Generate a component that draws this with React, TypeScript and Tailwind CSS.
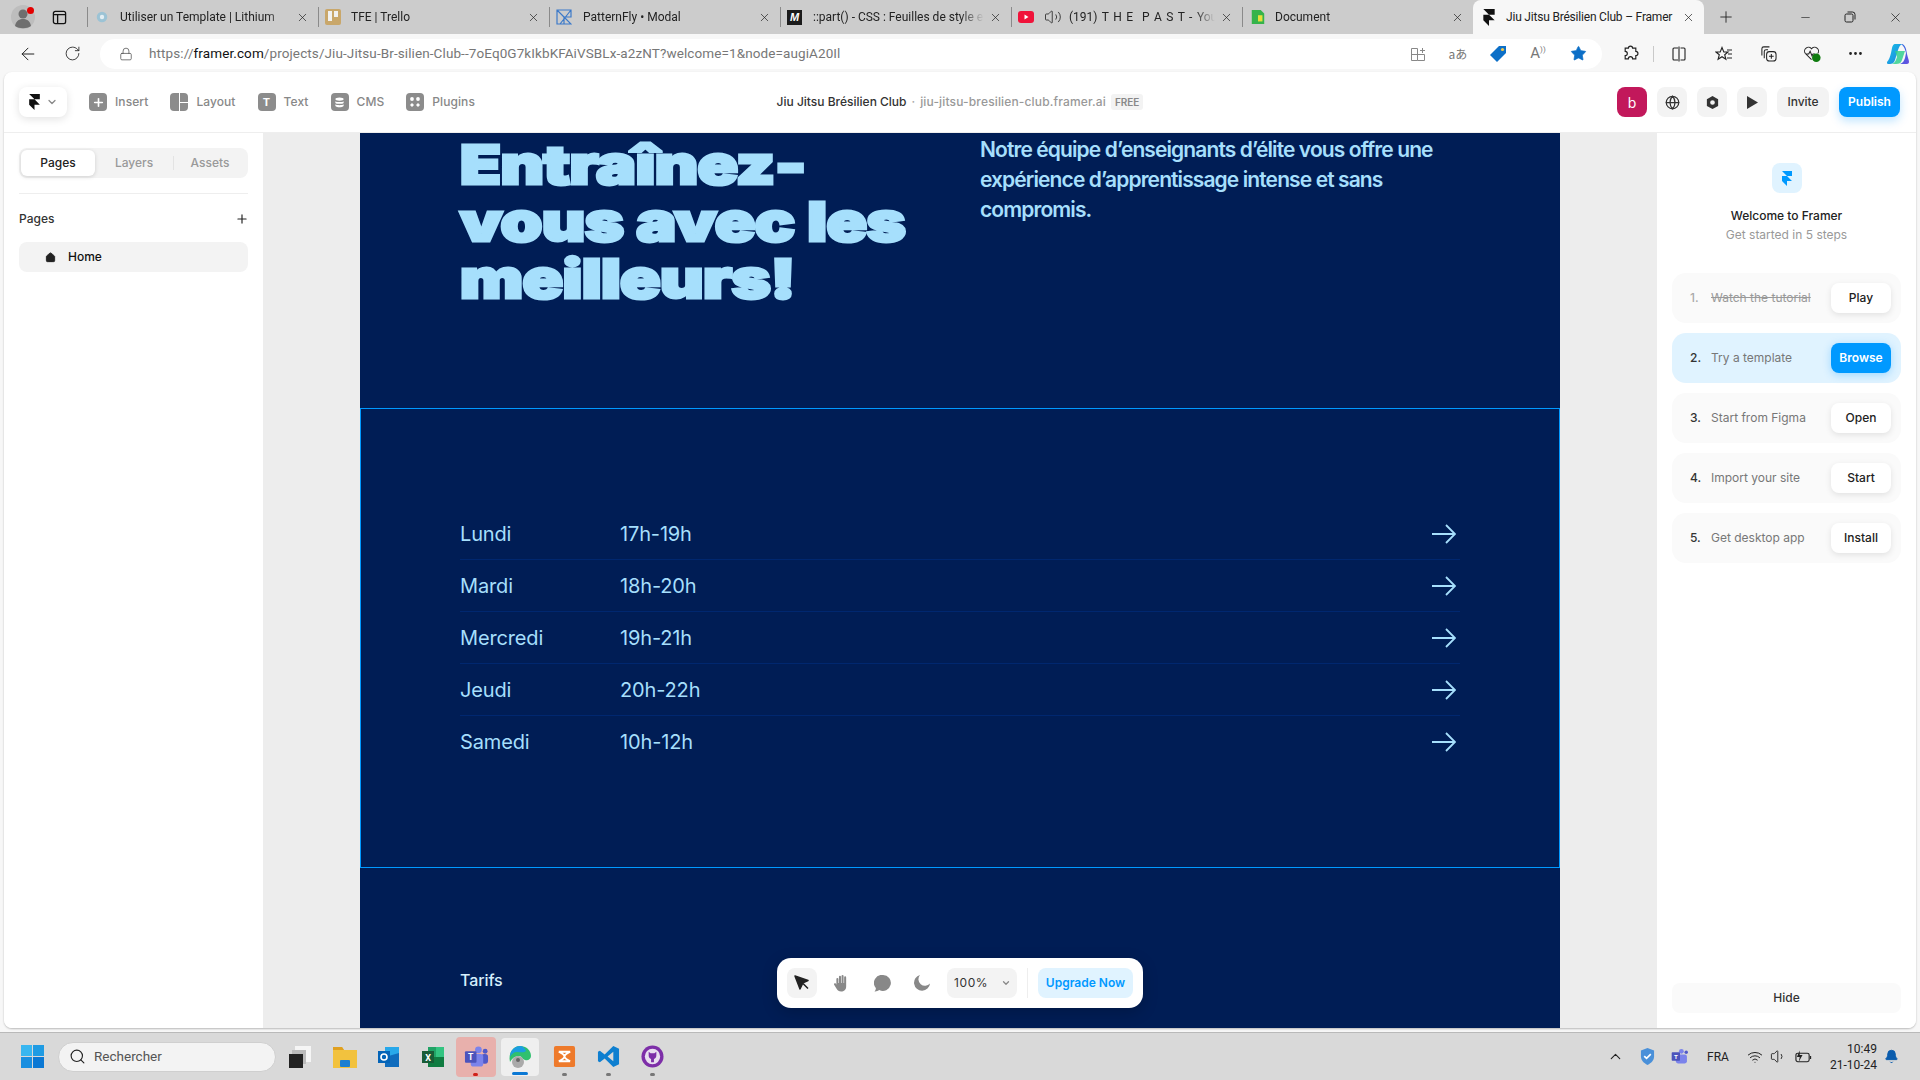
import React from "react";
import { ArrowLeft, RotateCw, Lock, X, Plus, Minus, Globe, ChevronDown, ChevronUp, Search, Bell, Volume1, Volume2, Wifi, MoreHorizontal, Star, Home } from "lucide-react";

const Framer = ({ className = "", color = "#111" }: { className?: string; color?: string }) => (
  <svg viewBox="0 0 14 21" className={className} fill={color}><path d="M0 0h14v7H7L0 0zm0 7h7l7 7H7v7L0 14V7z" /></svg>
);

const Close = ({ className = "" }: { className?: string }) => <X className={`w-[13px] h-[13px] shrink-0 text-[#222] ${className}`} strokeWidth={1.3} />;

const BrowserTabs = () => {
  const tabs = [
    { t: "Utiliser un Template | Lithium", textMl: "ml-[11px]", icon: <svg viewBox="0 0 16 16" className="w-[14px] h-[14px] ml-[8px]"><circle cx="8" cy="8" r="6" fill="#9cc3d5" /><circle cx="8" cy="8" r="2.5" fill="#e3eef3" /></svg> },
    { t: "TFE | Trello", textMl: "ml-[10px]", icon: <svg viewBox="0 0 16 16" className="w-[16px] h-[16px] ml-[7px]"><rect width="16" height="16" rx="2" fill="#c9a76a" /><rect x="3" y="2" width="4" height="10" fill="#f1f1f1" /><rect x="9" y="2" width="4" height="6" fill="#f1f1f1" /></svg> },
    { t: "PatternFly • Modal", textMl: "ml-[11px]", icon: <svg viewBox="0 0 16 16" className="w-[16px] h-[16px] ml-[7px]" fill="none" stroke="#3b79c9" strokeWidth="1.2"><path d="M1 1h14v7H8v7H1zM1 1l7 7M15 1 4 15M8 8l7 7H8" /></svg> },
    { t: "::part() - CSS : Feuilles de style en cascade", textMl: "ml-[11px]", icon: <span className="w-[15px] h-[15px] ml-[7px] bg-[#1b1b1b] text-white text-[11px] italic font-bold leading-[15px] text-center font-['Liberation_Sans',sans-serif]">M</span> },
    { t: "(191) T H E  P A S T - YouTube", textMl: "ml-[7px] [word-spacing:1.5px]", yt: true, icon: <svg viewBox="0 0 16 12" className="w-[16px] h-[12px] ml-[7px]"><rect width="16" height="12" rx="3" fill="#f0133a" /><path d="M6.5 3.5v5l4-2.5z" fill="#fff" /></svg> },
    { t: "Document", textMl: "ml-[9px]", icon: <svg viewBox="0 0 16 18" className="w-[16px] h-[16px] ml-[8px]"><path d="M1 1h10l4 4v12H1z" fill="#35b34a" /><rect x="8" y="7" width="5" height="7" fill="#e5e03c" /></svg> },
  ];
  return (
    <div className="h-[34px] bg-[#cccccc] flex items-stretch shrink-0">
      <div className="w-[87px] flex items-center relative">
        <svg viewBox="0 0 24 24" className="w-[24px] h-[24px] ml-[11px]">
          <circle cx="12" cy="12" r="12" fill="#bdbdbd" /><circle cx="12" cy="9" r="4.5" fill="#6f6f6f" /><path d="M4 21c1-6 5-7 8-7s7 1 8 7c-4 3-12 3-16 0z" fill="#6f6f6f" />
        </svg>
        <span className="absolute left-[27px] top-[7px] w-[7px] h-[7px] rounded-full bg-[#e30000]" />
        <svg viewBox="0 0 16 16" className="w-[15px] h-[15px] ml-[17px]" fill="none" stroke="#111" strokeWidth="1.4"><rect x="1.5" y="1.5" width="13" height="13" rx="2" /><path d="M1.5 5h13M6 5v9.5" /></svg>
      </div>
      {tabs.map((x, i) => (
        <div key={i} className="w-[231px] relative flex items-center text-[12px] text-[#222] font-['Roboto',sans-serif]">
          <span className="absolute left-0 top-[7px] h-[20px] w-px bg-[#8a8a8a]" />
          {x.icon}
          {x.yt && <Volume2 className="w-[18px] h-[18px] ml-[10px] text-[#222]" strokeWidth={1.1} />}
          <span className={`${x.textMl} flex-1 whitespace-pre overflow-hidden [mask-image:linear-gradient(to_right,black_86%,transparent)]`}>{x.t}</span>
          <Close className="mr-[9px] ml-[5px]" />
        </div>
      ))}
      <div className="w-[231px] bg-[#f7f7f7] rounded-t-lg flex items-center text-[12px] text-[#222] font-['Roboto',sans-serif]">
        <Framer className="w-[12px] h-[17px] ml-[10px]" />
        <span className="ml-[11px] flex-1 whitespace-nowrap tracking-[-0.2px]">Jiu Jitsu Brésilien Club – Framer</span>
        <Close className="mr-[9px]" />
      </div>
      <Plus className="w-[18px] h-[18px] ml-[13px] mt-[8px] text-[#222]" strokeWidth={1.2} />
      <div className="flex-1 flex items-center justify-end gap-[32px] pr-[17px]">
        <Minus className="w-[13px] h-[13px] text-[#222]" strokeWidth={1.2} />
        <svg viewBox="0 0 12 12" className="w-[12px] h-[12px]" fill="none" stroke="#222"><rect x="1" y="3" width="8" height="8" rx="1.5" /><path d="M3.5 1h5A2.5 2.5 0 0 1 11 3.5v5" /></svg>
        <X className="w-[15px] h-[15px] text-[#222]" strokeWidth={1.2} />
      </div>
    </div>
  );
};

const OmniSlot = ({ children }: { children: React.ReactNode }) => (
  <span className="w-[40px] flex items-center justify-center">{children}</span>
);

const AddressBar = () => (
  <div className="h-[38px] bg-[#f7f7f7] flex items-center shrink-0 pt-[1px]">
    <ArrowLeft className="w-[20px] h-[20px] ml-[18px] text-[#222]" strokeWidth={1.2} />
    <RotateCw className="w-[17px] h-[17px] ml-[26px] text-[#222]" strokeWidth={1.2} />
    <div className="ml-[19px] w-[1502px] h-[30px] bg-white rounded-full flex items-center font-['Roboto',sans-serif] text-[13.5px]">
      <Lock className="w-[14px] h-[14px] ml-[19px] text-[#444]" strokeWidth={1.2} />
      <span className="ml-[16px] text-[#777] whitespace-nowrap tracking-[0.1px]">https://<span className="text-[#111]">framer.com</span>/projects/Jiu-Jitsu-Br-silien-Club--7oEq0G7kIkbKFAiVSBLx-a2zNT?welcome=1&amp;node=augiA20Il</span>
      <div className="ml-auto mr-[4px] flex items-center">
        <OmniSlot><svg viewBox="0 0 16 16" className="w-[16px] h-[16px]" fill="none" stroke="#888"><path d="M1.500 2.500h6v12h-6zM1.500 8.500h13v6h-7M10 4.500h5M12.500 2v5" /></svg></OmniSlot>
        <OmniSlot><span className="text-[12px] leading-none text-[#777] whitespace-nowrap font-['Noto_Sans_CJK_JP',sans-serif]">aあ</span></OmniSlot>
        <OmniSlot><svg viewBox="0 0 18 18" className="w-[18px] h-[18px]"><path d="M10 1h7v7l-9 9-7-7z" fill="#0c6fc7" /><circle cx="13.5" cy="4.5" r="1.6" fill="#f2c94c" /></svg></OmniSlot>
        <OmniSlot><span className="text-[15px] leading-none text-[#777] whitespace-nowrap">A<span className="text-[8px] align-super">))</span></span></OmniSlot>
        <OmniSlot><Star className="w-[17px] h-[17px] text-[#0c6fc7]" fill="#0c6fc7" strokeWidth={1} /></OmniSlot>
      </div>
    </div>
    <svg viewBox="0 0 16 16" className="w-[17px] h-[17px] ml-[20px]" fill="none" stroke="#222" strokeWidth="1.1"><path d="M6 3a2 2 0 1 1 4 0h3v3a2 2 0 1 1 0 4v3h-3a2 2 0 1 0-4 0H3v-3a2 2 0 1 0 0-4V3z" /></svg>
    <span className="ml-[14px] w-px h-[16px] bg-[#c9c9c9]" />
    <svg viewBox="0 0 16 16" className="w-[16px] h-[16px] ml-[17px]" fill="none" stroke="#222" strokeWidth="1.1"><path d="M7 2H3a1 1 0 0 0-1 1v10a1 1 0 0 0 1 1h4M9.500 2H13a1 1 0 0 1 1 1v10a1 1 0 0 1-1 1H9.500M8 .5v15" /></svg>
    <svg viewBox="0 0 18 16" className="w-[18px] h-[16px] ml-[28px]" fill="none" stroke="#222" strokeWidth="1.1"><path d="M7 1.500 8.800 6H13l-3.300 2.700 1.200 4.600L7 10.700l-3.900 2.600 1.200-4.600L1 6h4.200zM12 4h5M13 8h4M12 12h5" /></svg>
    <svg viewBox="0 0 18 18" className="w-[17px] h-[17px] ml-[27px]" fill="none" stroke="#222" strokeWidth="1.1"><path d="M2 11V4a2 2 0 0 1 2-2h6M4.500 14V7a2 2 0 0 1 2-2h2" /><rect x="7" y="7" width="10" height="10" rx="3" /><path d="M12 9.500v5M9.500 12h5" /></svg>
    <svg viewBox="0 0 20 18" className="w-[19px] h-[18px] ml-[26px]" fill="none" stroke="#222" strokeWidth="1.1"><path d="M9 15 2.500 8.500A4 4 0 0 1 9 3.500a4 4 0 0 1 6.500 5M3 9h3l1.500-3 2 5 1-2h2" /><circle cx="14" cy="13" r="4.500" fill="#107c10" stroke="none" /></svg>
    <MoreHorizontal className="w-[17px] h-[17px] ml-[25px] text-[#222]" />
    <svg viewBox="0 0 24 24" className="w-[24px] h-[24px] ml-[22px]">
      <defs>
        <linearGradient id="cpA" x1="0" y1="0" x2="1" y2="1"><stop offset="0" stopColor="#19c3e6" /><stop offset="1" stopColor="#1f7fe0" /></linearGradient>
        <linearGradient id="cpB" x1="0" y1="0" x2="1" y2="1"><stop offset="0" stopColor="#2b6fe0" /><stop offset="1" stopColor="#6a4fe0" /></linearGradient>
      </defs>
      <path d="M9 2h7c-2 1-3 3-4 6l-3 10c-1 3-3 4-5 4H2c-1 0-1-1-1-2 2-2 3-5 4-9l1-5c.4-2 1.500-4 3-4z" fill="url(#cpA)" />
      <path d="M15 2c3 0 4 2 5 5l1 5c.6 3 2 6 2 8 0 1-1 2-2 2h-7c3-1 4-3 5-6l1-5c-1-4-2-7-5-9z" fill="url(#cpB)" />
      <path d="M9 9h10l-3 9c-1 3-3 4-6 4H6c3-1 4-4 5-7z" fill="#34d08e" opacity=".85" />
    </svg>
  </div>
);

const Tile = ({ children }: { children: React.ReactNode }) => (
  <span className="w-[18px] h-[18px] rounded-[4px] bg-[#8c8c8c] flex items-center justify-center shrink-0">{children}</span>
);

const tools: [string, React.ReactNode][] = [
  ["Insert", <Tile><Plus className="w-[13px] h-[13px] text-white" strokeWidth={3} /></Tile>],
  ["Layout", <span className="w-[18px] h-[18px] shrink-0 grid grid-cols-2 grid-rows-2 gap-px overflow-hidden rounded-[4px]"><span className="row-span-2 bg-[#8c8c8c]" /><span className="bg-[#8c8c8c]" /><span className="bg-[#8c8c8c]" /></span>],
  ["Text", <Tile><span className="text-white text-[11px] font-bold leading-none">T</span></Tile>],
  ["CMS", <Tile><svg viewBox="0 0 12 12" className="w-[11px] h-[11px]" fill="#fff"><ellipse cx="6" cy="2.300" rx="4.500" ry="1.800" /><path d="M1.500 4.500c1.500 1.300 7.500 1.300 9 0v2c-1.500 1.300-7.500 1.300-9 0zM1.500 8c1.500 1.300 7.500 1.300 9 0v1.800c-1.500 1.800-7.500 1.800-9 0z" /></svg></Tile>],
  ["Plugins", <Tile><svg viewBox="0 0 12 12" className="w-[12px] h-[12px]" fill="#fff"><circle cx="3" cy="3" r="1.900" /><circle cx="9" cy="3" r="1.900" /><path d="M3 7l2 2-2 2-2-2zM9 7l2 2-2 2-2-2z" /></svg></Tile>],
];

const Square = ({ children }: { children: React.ReactNode }) => (
  <span className="w-[30px] h-[30px] rounded-[8px] bg-[#f3f3f3] flex items-center justify-center">{children}</span>
);

const Toolbar = () => (
  <div className="h-[61px] shrink-0 border-b border-[#eeeeee] grid grid-cols-[1fr_auto_1fr] items-center">
    <div className="flex items-center pl-[15px]">
      <div className="w-[48px] h-[30px] rounded-[8px] bg-white shadow-[0_2px_8px_rgba(0,0,0,0.12)] flex items-center pl-[10px] gap-[6px]">
        <Framer className="w-[11px] h-[16px]" />
        <ChevronDown className="w-[12px] h-[12px] text-[#888]" strokeWidth={2.5} />
      </div>
      <div className="flex items-center gap-[22px] ml-[22px]">
        {tools.map(([t, i]) => (
          <div key={t} className="flex items-center gap-[8px] text-[12px] font-medium text-[#888] tracking-[0.08px]">{i}{t}</div>
        ))}
      </div>
    </div>
    <div className="flex items-center text-[12px] font-medium whitespace-nowrap">
      <span className="text-[#333]">Jiu Jitsu Brésilien Club</span>
      <span className="text-[#aaa] mx-[5px]">·</span>
      <span className="text-[#999] tracking-[0.15px]">jiu-jitsu-bresilien-club.framer.ai</span>
      <span className="ml-[5px] h-[16px] px-[4px] rounded-[3px] bg-[#f3f3f3] text-[#888] text-[10px] font-semibold leading-[16px]">FREE</span>
    </div>
    <div className="flex items-center justify-end gap-[10px] pr-[16px]">
      <span className="w-[30px] h-[30px] rounded-[8px] bg-[#c2185b] text-white text-[14px] flex items-center justify-center">b</span>
      <Square><Globe className="w-[15px] h-[15px] text-[#333]" strokeWidth={2} /></Square>
      <Square><svg viewBox="0 0 16 16" className="w-[15px] h-[15px]"><path fillRule="evenodd" clipRule="evenodd" fill="#333" d="M8 1l6 3.400v7.200L8 15l-6-3.400V4.400zM8 5.500a2.500 2.500 0 1 0 0 5 2.500 2.500 0 0 0 0-5z" /></svg></Square>
      <Square><svg viewBox="0 0 12 14" className="w-[11px] h-[13px]"><path d="M0 0l12 7-12 7z" fill="#333" /></svg></Square>
      <span className="w-[52px] h-[30px] rounded-[8px] bg-[#f3f3f3] text-[#333] text-[12px] font-medium flex items-center justify-center">Invite</span>
      <span className="w-[61px] h-[30px] rounded-[8px] bg-[#0099ff] text-white text-[12px] font-semibold flex items-center justify-center shadow-[0_4px_10px_rgba(0,153,255,0.25)]">Publish</span>
    </div>
  </div>
);

const LeftPanel = () => (
  <aside className="w-[259px] shrink-0 bg-white pl-[15px] pr-[15px] pt-[15px] text-[12px] font-medium">
    <div className="h-[30px] rounded-[8px] bg-[#f3f3f3] flex items-center pl-[2px] pr-[2px] text-[#999]">
      <span className="w-[74px] h-[26px] rounded-[6px] bg-white text-[#222] shadow-[0_1px_4px_rgba(0,0,0,0.15)] flex items-center justify-center">Pages</span>
      <span className="w-[78px] text-center">Layers</span>
      <span className="w-px h-[14px] bg-[#e3e3e3]" />
      <span className="flex-1 text-center">Assets</span>
    </div>
    <div className="h-px bg-[#eeeeee] mt-[15px]" />
    <div className="flex items-center justify-between mt-[17px] h-[16px] text-[#333]">
      Pages
      <Plus className="w-[14px] h-[14px] text-[#222] mr-[-1px]" strokeWidth={2} />
    </div>
    <div className="mt-[15px] h-[30px] rounded-[8px] bg-[#f3f3f3] flex items-center pl-[26px] gap-[12px] text-[#111]">
      <Home className="w-[11px] h-[11px] text-[#222]" fill="#222" strokeWidth={2} />
      Home
    </div>
  </aside>
);

const days = [["Lundi", "17h-19h"], ["Mardi", "18h-20h"], ["Mercredi", "19h-21h"], ["Jeudi", "20h-22h"], ["Samedi", "10h-12h"]];

const Arrow = () => (
  <svg viewBox="0 0 24 20" className="ml-auto mr-[4px] w-[24px] h-[20px]" fill="none" stroke="#a6dffc" strokeWidth="1.8"><path d="M0 10h23M14 1l9 9-9 9" /></svg>
);

const Page = () => (
  <div className="w-[1200px] h-full bg-[#001d55] overflow-hidden text-[#a6dffc]">
    <div className="h-[275px] flex px-[100px]">
      <div className="w-[520px] shrink-0 pt-[3px]">
        <h1 className="origin-left scale-x-[1.24] font-['Inter',sans-serif] font-black text-[54px] leading-[57px] tracking-[-0.5px] whitespace-nowrap [-webkit-text-stroke:3px_#a6dffc]">
          Entraînez-<br />vous avec les<br />meilleurs!
        </h1>
      </div>
      <p className="pt-[2px] w-[470px] font-['Inter',sans-serif] font-semibold text-[21px] leading-[30px] tracking-[-0.9px]">
        Notre équipe d’enseignants d’élite vous offre une<br />expérience d’apprentissage intense et sans<br />compromis.
      </p>
    </div>
    <div className="h-[460px] border border-[#0099ff] px-[99px] pt-[99px]">
      {days.map(([d, h], i) => (
        <div key={d} className={`h-[52px] flex items-center text-[20px] tracking-[-0.15px] ${i < 4 ? "border-b border-[#00276f]" : ""}`}>
          <span className="w-[160px]">{d}</span>
          <span>{h}</span>
          <Arrow />
        </div>
      ))}
    </div>
    <div className="pl-[100px] pt-[100px] text-[16px] font-medium text-[#d6effc] tracking-[-0.1px]">Tarifs</div>
  </div>
);

const FloatBar = () => (
  <div className="absolute left-1/2 -translate-x-1/2 bottom-[20px] w-[366px] h-[50px] bg-white rounded-[14px] shadow-[0_4px_16px_rgba(0,0,0,0.2)] flex items-center px-[10px]">
    <Square><svg viewBox="0 0 16 16" className="w-[16px] h-[16px]"><path d="M1 1l13 4.500-5 2.200L6 14zM9 8.500l5 5" fill="#222" stroke="#222" strokeWidth="1.500" strokeLinejoin="round" /></svg></Square>
    <span className="w-[30px] h-[30px] ml-[10px] flex items-center justify-center"><svg viewBox="0 0 16 16" className="w-[18px] h-[18px]" fill="#888"><path d="M3 4.500a.9.900 0 0 1 1.800 0V8h.500V2.500a.9.900 0 0 1 1.800 0V8h.500V1.700a.9.900 0 0 1 1.800 0V8h.500V3a.9.900 0 0 1 1.800 0v8c0 3-2 4.500-4.500 4.500-2 0-3-1-4-2.500L1 9.500c-.6-1 .8-1.800 1.500-1L3 9.500z" /></svg></span>
    <span className="w-[30px] h-[30px] ml-[10px] flex items-center justify-center"><svg viewBox="0 0 16 16" className="w-[17px] h-[17px]" fill="#888"><path d="M8.500 0a7.500 7.500 0 1 1-3.500 14.200c-1.200 1-2.800 1.400-4.500 1.300 1-1 1.400-2.200 1.200-3.300A7.500 7.500 0 0 1 8.500 0z" /></svg></span>
    <span className="w-[30px] h-[30px] ml-[10px] flex items-center justify-center"><svg viewBox="0 0 16 16" className="w-[16px] h-[16px]" fill="#888"><path d="M6 0a6.500 6.500 0 0 0 10 8.500A8 8 0 1 1 6 0z" /></svg></span>
    <div className="ml-[10px] w-[70px] h-[30px] rounded-[8px] bg-[#f3f3f3] flex items-center justify-between pl-[7px] pr-[6px] text-[12px] text-[#333] tracking-[0.6px]">
      100%
      <ChevronDown className="w-[10px] h-[10px] text-[#888]" strokeWidth={3} />
    </div>
    <span className="ml-[10px] w-px h-[30px] bg-[#eeeeee]" />
    <span className="ml-[10px] w-[95px] h-[30px] rounded-[8px] bg-[#e0f3ff] text-[#0099ff] text-[12px] font-semibold flex items-center justify-center">Upgrade Now</span>
  </div>
);

const steps = [
  ["1.", "Watch the tutorial", "Play"],
  ["2.", "Try a template", "Browse"],
  ["3.", "Start from Figma", "Open"],
  ["4.", "Import your site", "Start"],
  ["5.", "Get desktop app", "Install"],
];

const RightPanel = () => (
  <aside className="w-[259px] shrink-0 bg-white px-[15px] pt-[30px] pb-[15px] text-[12px] flex flex-col">
    <div className="self-center w-[30px] h-[30px] rounded-[8px] bg-[#e0f3ff] flex items-center justify-center">
      <Framer className="w-[10px] h-[15px]" color="#0099ff" />
    </div>
    <div className="mt-[13px] text-center font-medium text-[#222] leading-[19px]">Welcome to Framer</div>
    <div className="text-center text-[#999] leading-[19px]">Get started in 5 steps</div>
    <div className="mt-[29px] flex flex-col gap-[10px]">
      {steps.map(([n, t, b], i) => (
        <div key={n} className={`h-[50px] rounded-[14px] flex items-center pl-[18px] pr-[10px] ${i === 1 ? "bg-[#e0f3ff]" : "bg-[#fafafa]"}`}>
          <span className={`w-[21px] font-medium ${i === 0 ? "text-[#aaa]" : "text-[#333]"}`}>{n}</span>
          <span className={i === 0 ? "text-[#999] line-through" : "text-[#777]"}>{t}</span>
          <span className={`ml-auto w-[60px] h-[30px] rounded-[8px] flex items-center justify-center ${i === 1 ? "font-semibold bg-[#0099ff] text-white shadow-[0_2px_8px_rgba(0,153,255,0.3)]" : "bg-white text-[#222] font-medium shadow-[0_2px_6px_rgba(0,0,0,0.1)]"}`}>{b}</span>
        </div>
      ))}
    </div>
    <div className="mt-auto h-[30px] rounded-[8px] bg-[#fafafa] flex items-center justify-center font-medium text-[#333]">Hide</div>
  </aside>
);

const Taskbar = () => (
  <div className="h-[48px] bg-[#d9d9d9] border-t border-[#b9b9b9] flex items-center shrink-0 relative font-['Roboto',sans-serif]">
    <div className="ml-[21px] w-[23px] h-[23px] grid grid-cols-2 grid-rows-2 gap-[1px]">
      <span className="bg-[#38b6f0]" /><span className="bg-[#1f9be3]" /><span className="bg-[#1a8fe0]" /><span className="bg-[#0b78d4]" />
    </div>
    <div className="ml-[14px] w-[218px] h-[30px] rounded-full bg-[#f3f3f3] border border-[#cfcfcf] flex items-center">
      <Search className="ml-[10px] w-[17px] h-[17px] text-[#222]" strokeWidth={1.6} />
      <span className="ml-[8px] text-[13.5px] text-[#555]">Rechercher</span>
    </div>
    <svg viewBox="0 0 24 24" className="ml-[12px] w-[24px] h-[24px]"><rect x="7" y="1" width="16" height="16" fill="#f5f5f5" /><rect x="4" y="5" width="14" height="14" fill="#bbb" /><rect x="1" y="9" width="14" height="14" fill="#222" /></svg>
    <svg viewBox="0 0 26 24" className="ml-[20px] w-[26px] h-[24px]"><path d="M1 2h9l2 3h13v18H1z" fill="#f2c23e" /><path d="M1 2h9l2 3H1z" fill="#e0a020" /><rect x="8" y="15" width="10" height="7" rx="1" fill="#1b7fd1" /></svg>
    <svg viewBox="0 0 24 24" className="ml-[19px] w-[24px] h-[24px]"><path d="M8 2h14v20H8z" fill="#28a8ea" /><path d="M8 12l14-4v14H8z" fill="#0f6cbd" /><rect x="1" y="6" width="12" height="12" fill="#0364b8" /><circle cx="7" cy="12" r="3" fill="none" stroke="#fff" strokeWidth="1.600" /></svg>
    <svg viewBox="0 0 24 24" className="ml-[20px] w-[24px] h-[24px]"><rect x="7" y="2" width="16" height="20" fill="#21a366" /><rect x="15" y="2" width="8" height="10" fill="#33c481" /><rect x="7" y="12" width="16" height="10" fill="#107c41" /><rect x="1" y="6" width="12" height="12" fill="#185c37" /><text x="7" y="15.500" fontSize="9" fill="#fff" textAnchor="middle" fontWeight="700">X</text></svg>
    <div className="ml-[11px] w-[40px] h-[40px] rounded-[4px] bg-[#e8b0ac] relative flex items-center justify-center">
      <svg viewBox="0 0 26 24" className="w-[25px] h-[24px]"><circle cx="15" cy="4.500" r="3.500" fill="#7b83eb" /><circle cx="22" cy="6" r="2.500" fill="#5059c9" /><rect x="18" y="9" width="7" height="10" rx="3" fill="#5059c9" /><rect x="7" y="9" width="13" height="13" rx="3" fill="#7b83eb" /><rect x="1" y="6" width="12" height="12" rx="1" fill="#4b53bc" /><text x="7" y="15.500" fontSize="9" fill="#fff" textAnchor="middle" fontWeight="700">T</text></svg>
      <span className="absolute bottom-[1px] left-[17px] w-[5px] h-[3px] rounded-full bg-[#d0201a]" />
    </div>
    <div className="ml-[5px] w-[38px] h-[38px] rounded-[4px] bg-[#efefef] relative flex items-center justify-center">
      <svg viewBox="0 0 24 24" className="w-[24px] h-[24px]"><path d="M12 1c6 0 11 4 11 10 0 3-3 5-6 4-3-1-3-4-6-4-5 0-8 4-9 6C0 8 5 1 12 1z" fill="#30c06e" /><path d="M12 1C7 1 2 5 2 12c1-3 4-5 7-5 4 0 7 1 9-1-1-3-3-5-6-5z" fill="#1b9de2" /><circle cx="10" cy="17" r="6" fill="#aaa" /><circle cx="10" cy="15" r="2" fill="#666" /></svg>
      <span className="absolute bottom-[1px] left-[11px] w-[16px] h-[3px] rounded-full bg-[#0b78d4]" />
    </div>
    <div className="ml-[14px] w-[23px] relative flex justify-center">
      <svg viewBox="0 0 24 24" className="w-[23px] h-[23px]"><rect x="1" y="1" width="22" height="22" rx="2" fill="#ee7a2b" /><path d="M6 7h12M6 17h12M6 7c8 4 8 6 0 10M18 7c-8 4-8 6 0 10" stroke="#fff" strokeWidth="2" fill="none" /></svg>
      <span className="absolute -bottom-[8px] w-[5px] h-[3px] rounded-full bg-[#777]" />
    </div>
    <div className="ml-[21px] w-[23px] relative flex justify-center">
      <svg viewBox="0 0 24 24" className="w-[23px] h-[23px]"><path d="M17 1l6 3v16l-6 3-9-9-5 4-2-1V7l2-1 5 4z" fill="#0e7fd0" /><path d="M17 7l-6 5 6 5z" fill="#d9d9d9" /></svg>
      <span className="absolute -bottom-[8px] w-[5px] h-[3px] rounded-full bg-[#777]" />
    </div>
    <div className="ml-[21px] w-[23px] relative flex justify-center">
      <svg viewBox="0 0 24 24" className="w-[23px] h-[23px]"><circle cx="12" cy="12" r="11.500" fill="#7d2ea8" /><circle cx="12" cy="12" r="8" fill="#e9dff0" /><path d="M8 7l2 1.500h4L16 7v4c0 2-1 3-2.500 3.500V18h-3v-3.500C9 14 8 13 8 11z" fill="#7d2ea8" /></svg>
      <span className="absolute -bottom-[8px] w-[5px] h-[3px] rounded-full bg-[#777]" />
    </div>
    <div className="ml-auto flex items-center text-[#222]">
      <ChevronUp className="w-[17px] h-[17px]" strokeWidth={1.6} />
      <svg viewBox="0 0 16 18" className="ml-[16px] w-[15px] h-[17px]"><path d="M8 0l7 2.500V9c0 4-3 7-7 9-4-2-7-5-7-9V2.500z" fill="#4a90d9" /><path d="M4.500 8.500l2.500 2.500 4.500-4.500" stroke="#fff" strokeWidth="1.800" fill="none" /></svg>
      <svg viewBox="0 0 26 24" className="ml-[16px] w-[18px] h-[17px]"><circle cx="15" cy="4.500" r="3.500" fill="#7b83eb" /><circle cx="22" cy="6" r="2.500" fill="#5059c9" /><rect x="7" y="9" width="16" height="13" rx="3" fill="#7b83eb" /><rect x="1" y="6" width="12" height="12" rx="1" fill="#4b53bc" /><text x="7" y="15.500" fontSize="9" fill="#fff" textAnchor="middle" fontWeight="700">T</text></svg>
      <span className="ml-[18px] text-[12px] w-[22px]">FRA</span>
      <Wifi className="ml-[18px] w-[16px] h-[16px]" strokeWidth={1.5} />
      <Volume1 className="ml-[7px] w-[17px] h-[17px]" strokeWidth={1.3} />
      <svg viewBox="0 0 18 14" className="ml-[8px] w-[17px] h-[14px]" fill="none" stroke="#222" strokeWidth="1.200"><rect x="1" y="3" width="14" height="9" rx="2" /><path d="M16.500 6v3" /><path d="M5 0 2 7h3l-1 5 4-7H5z" fill="#222" stroke="none" /></svg>
      <div className="ml-[5px] w-[60px] text-right text-[12px] leading-[16px]"><div>10:49</div><div>21-10-24</div></div>
      <Bell className="ml-[7px] mr-[21px] w-[15px] h-[15px] text-[#0b5cad]" fill="#0b5cad" strokeWidth={1.500} />
    </div>
  </div>
);

export default function App() {
  return (
    <div className="w-[1920px] h-[1080px] overflow-hidden bg-[#f7f7f7] flex flex-col font-['Inter',sans-serif]">
      <BrowserTabs />
      <AddressBar />
      <div className="mx-[4px] h-[956px] shrink-0 bg-white rounded-t-lg rounded-b-lg flex flex-col overflow-hidden shadow-[0_1px_2px_rgba(0,0,0,0.25)]">
        <Toolbar />
        <div className="flex-1 min-h-0 flex">
          <LeftPanel />
          <main className="flex-1 min-w-0 bg-[#ededed] flex justify-center relative overflow-hidden">
            <Page />
            <FloatBar />
          </main>
          <RightPanel />
        </div>
      </div>
      <div className="flex-1" />
      <Taskbar />
    </div>
  );
}
